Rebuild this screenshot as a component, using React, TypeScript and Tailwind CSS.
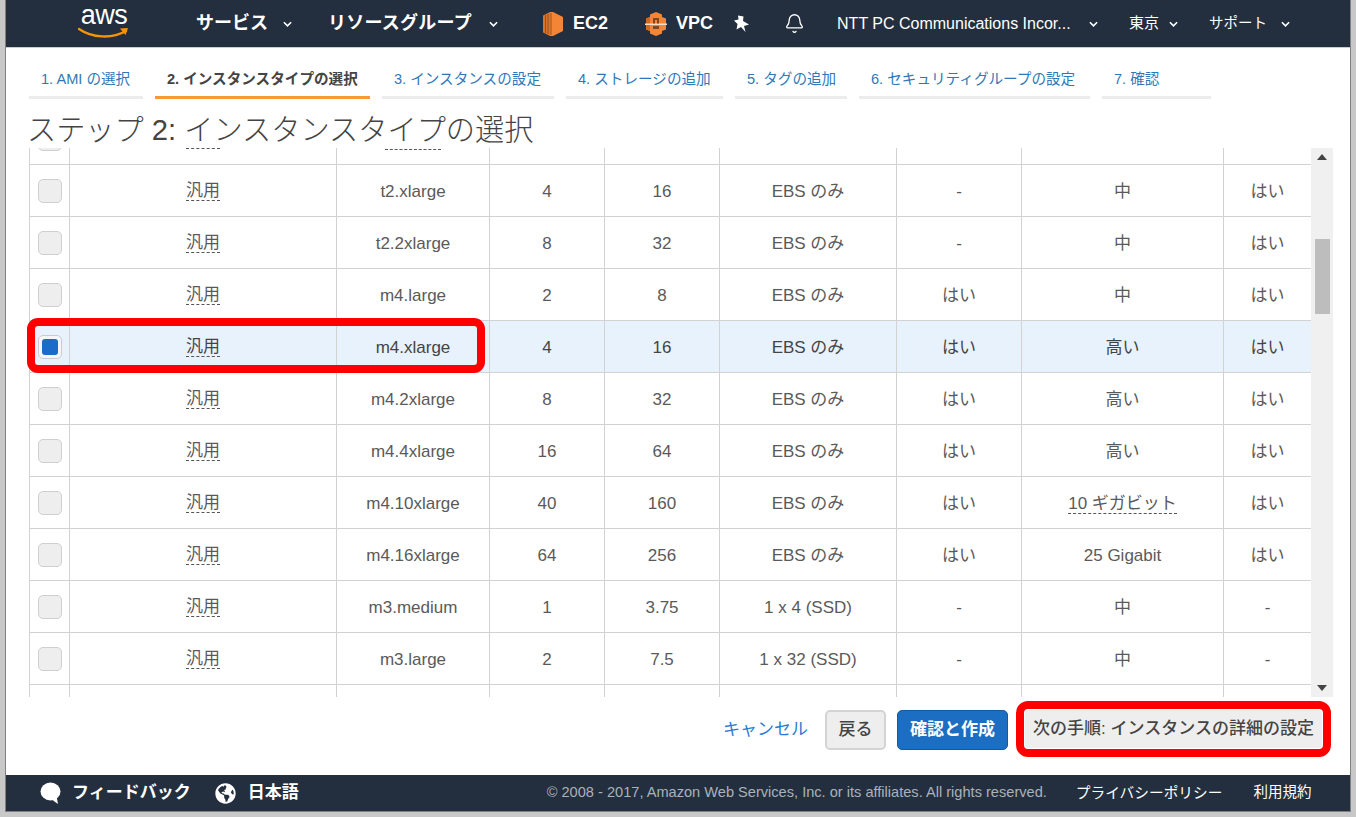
import { Bell } from "lucide-react"
import { FaGlobeAmericas } from "react-icons/fa"

const tabs = [
  { label: "1. AMI の選択", w: "w-[114px]" },
  { label: "2. インスタンスタイプの選択", w: "w-[215px]", active: true },
  { label: "3. インスタンスの設定", w: "w-[172px]" },
  { label: "4. ストレージの追加", w: "w-[157px]" },
  { label: "5. タグの追加", w: "w-[112px]" },
  { label: "6. セキュリティグループの設定", w: "w-[231px]" },
  { label: "7. 確認", w: "w-[109px]" },
]

type Row = { type: string; cpu: string; mem: string; storage: string; ebs: string; net: string; ipv6: string; selected?: boolean; dashedNet?: boolean; dashedType?: boolean }

const rows: Row[] = [
  { type: "t2.large", cpu: "2", mem: "8", storage: "EBS のみ", ebs: "-", net: "低から中", ipv6: "はい", dashedType: true },
  { type: "t2.xlarge", cpu: "4", mem: "16", storage: "EBS のみ", ebs: "-", net: "中", ipv6: "はい" },
  { type: "t2.2xlarge", cpu: "8", mem: "32", storage: "EBS のみ", ebs: "-", net: "中", ipv6: "はい" },
  { type: "m4.large", cpu: "2", mem: "8", storage: "EBS のみ", ebs: "はい", net: "中", ipv6: "はい" },
  { type: "m4.xlarge", cpu: "4", mem: "16", storage: "EBS のみ", ebs: "はい", net: "高い", ipv6: "はい", selected: true },
  { type: "m4.2xlarge", cpu: "8", mem: "32", storage: "EBS のみ", ebs: "はい", net: "高い", ipv6: "はい" },
  { type: "m4.4xlarge", cpu: "16", mem: "64", storage: "EBS のみ", ebs: "はい", net: "高い", ipv6: "はい" },
  { type: "m4.10xlarge", cpu: "40", mem: "160", storage: "EBS のみ", ebs: "はい", net: "10 ギガビット", ipv6: "はい", dashedNet: true },
  { type: "m4.16xlarge", cpu: "64", mem: "256", storage: "EBS のみ", ebs: "はい", net: "25 Gigabit", ipv6: "はい" },
  { type: "m3.medium", cpu: "1", mem: "3.75", storage: "1 x 4 (SSD)", ebs: "-", net: "中", ipv6: "-" },
  { type: "m3.large", cpu: "2", mem: "7.5", storage: "1 x 32 (SSD)", ebs: "-", net: "中", ipv6: "-" },
  { type: "m3.xlarge", cpu: "4", mem: "15", storage: "2 x 40 (SSD)", ebs: "-", net: "高い", ipv6: "-" },
]

function Caret({ className = "" }: { className?: string }) {
  return (
    <svg viewBox="0 0 10 6" className={`w-[9px] h-[6px] ${className}`}>
      <path d="M1 1l4 4 4-4" fill="none" stroke="#fff" strokeWidth="1.8" />
    </svg>
  )
}

function AwsLogo() {
  return (
    <div className="relative w-[52px] h-[40px] mt-[-3px]">
      <span className="block text-center text-[27px] leading-[27px] text-white tracking-[-0.5px]">aws</span>
      <svg viewBox="0 0 52 14" className="absolute left-0 top-[25px] w-[52px] h-[14px]">
        <path d="M1 2c13 9 33 10 47 2" fill="none" stroke="#f79400" strokeWidth="2.4" strokeLinecap="round" />
        <path d="M42 1.500l8-.5-2.500 7z" fill="#f79400" />
      </svg>
    </div>
  )
}

function Ec2Icon() {
  return (
    <svg viewBox="0 0 22 24" className="w-[22px] h-[24px]">
      <path d="M8 0L1 3.500v17L8 24z" fill="#d9742a" />
      <path d="M8 0h3l10 5v14l-10 5H8z" fill="#f58536" />
      <path d="M3.500 3v18M6 2v20M9 1v22" stroke="#8f4d1c" strokeWidth="0.9" />
    </svg>
  )
}

function VpcIcon() {
  return (
    <svg viewBox="0 0 22 24" className="w-[22px] h-[24px]">
      <path d="M11 0l6 2.500V5l4 1.500v11L17 19v2.500L11 24l-6-2.500V19l-4-1.500v-11L5 5V2.500z" fill="#f58536" />
      <path d="M1 6.500L5 5v14l-4-1.500z" fill="#c96a26" />
      <path d="M0 11.500h22V13H0z" fill="#f3dfc9" />
      <path d="M8 6h6v5.500h-2V8h-2v3.500H8zM8 14h6v3H8z" fill="#80481f" />
    </svg>
  )
}

function PinIcon() {
  return (
    <svg viewBox="0 0 17 17" className="w-[17px] h-[17px]">
      <path d="M5 0.500l5.500 1-.5 4.500 6 3.500-5 1.500 1.500 6-4.500-5-4.500 2.500 1-5.500L1 5.500 5.500 4.500z" fill="#fff" />
    </svg>
  )
}

function Bubble() {
  return (
    <svg viewBox="0 0 22 22" className="w-[22px] h-[22px]">
      <ellipse cx="10.500" cy="9.500" rx="10" ry="9" fill="#fff" />
      <path d="M11 17l7 5-1.500-8z" fill="#fff" />
    </svg>
  )
}

function Checkbox({ checked }: { checked?: boolean }) {
  return (
    <div className={`w-[24px] h-[24px] rounded-[5px] border flex items-center justify-center ${checked ? "border-[#c8ccd2] bg-[#f4f6f8]" : "border-[#cfcfcf] bg-[#eeeeee]"}`}>
      {checked && <div className="w-[16px] h-[16px] rounded-[3px] bg-[#1a6cc8]" />}
    </div>
  )
}

function Dashed({ children }: { children: React.ReactNode }) {
  return <span className="border-b border-dashed border-[#555]">{children}</span>
}

export default function App() {
  return (
    <div className="w-[1356px] h-[817px] overflow-hidden relative bg-[#c8c8c8] pl-[6px] pr-[6px] pb-[6px] font-['Liberation_Sans','Noto_Sans_CJK_JP',sans-serif]">
      <div className="h-[811px] flex flex-col bg-white shadow-[0_0_0_1px_#808080]">
        {/* top nav */}
        <div className="h-[48px] shrink-0 bg-[#232f3e] border-b border-[#c9ccd0] flex items-center text-white">
          <div className="ml-[72px]"><AwsLogo /></div>
          <span className="ml-[66px] text-[18px] font-bold">サービス</span>
          <Caret className="ml-[15px]" />
          <span className="ml-[36px] text-[18px] tracking-[0.25px] font-bold">リソースグループ</span>
          <Caret className="ml-[17px]" />
          <div className="ml-[44px]"><Ec2Icon /></div>
          <span className="ml-[9px] text-[18px] font-bold">EC2</span>
          <div className="ml-[37px]"><VpcIcon /></div>
          <span className="ml-[9px] text-[18px] font-bold">VPC</span>
          <div className="ml-[20px]"><PinIcon /></div>
          <Bell size={21} strokeWidth={1.5} className="ml-[34px]" />
          <span className="ml-[32px] text-[16px] w-[234px] whitespace-nowrap">NTT PC Communications Incor...</span>
          <Caret className="ml-[18px]" />
          <span className="ml-[31px] text-[15px]">東京</span>
          <Caret className="ml-[10px]" />
          <span className="ml-[31px] text-[14.500px] whitespace-nowrap">サポート</span>
          <Caret className="ml-[14px]" />
        </div>

        {/* wizard steps */}
        <div className="h-[51px] shrink-0 pl-[23px] flex gap-[12px] items-start">
          {tabs.map((t) => (
            <div key={t.label} className={`${t.w} h-[51px] pl-[12px] pt-[20px] border-b-[3px] text-[14.600px] leading-[22px] whitespace-nowrap ${t.active ? "border-[#f79b2e] text-[#444] font-bold" : "border-[#ececec] text-[#2f78b7]"}`}>
              {t.label}
            </div>
          ))}
        </div>

        <h1 className="h-[49px] shrink-0 pl-[21px] pt-[13px] text-[29.200px] leading-[36px] font-light text-[#444] whitespace-nowrap">
          ステップ 2: インスタンスタイプの選択
        </h1>

        {/* instance table, scrolled */}
        <div className="h-[549px] shrink-0 ml-[23px] w-[1304px] flex bg-white">
          <div className="w-[1282px] overflow-hidden">
            <table className="mt-[-36px] table-fixed border-collapse text-[17px] w-[1282px]">
              <colgroup>
                <col className="w-[40px]" />
                <col className="w-[267px]" />
                <col className="w-[153px]" />
                <col className="w-[115px]" />
                <col className="w-[115px]" />
                <col className="w-[177px]" />
                <col className="w-[125px]" />
                <col className="w-[202px]" />
                <col className="w-[88px]" />
              </colgroup>
              <tbody>
                {rows.map((r) => (
                  <tr key={r.type} className={`h-[52px] text-center ${r.selected ? "bg-[#e8f2fc] text-[#444]" : "text-[#5a5a5a]"}`}>
                    <td className="border border-[#d2d2d2] pl-[8px]"><Checkbox checked={r.selected} /></td>
                    <td className="border border-[#d2d2d2] pt-[1px]"><Dashed>汎用</Dashed></td>
                    <td className="border border-[#d2d2d2] pt-[2px]">{r.dashedType ? <Dashed>{r.type}</Dashed> : r.type}</td>
                    <td className="border border-[#d2d2d2] pt-[2px]">{r.cpu}</td>
                    <td className="border border-[#d2d2d2] pt-[2px]">{r.mem}</td>
                    <td className="border border-[#d2d2d2] pt-[2px]">{r.storage}</td>
                    <td className="border border-[#d2d2d2] pt-[2px]">{r.ebs}</td>
                    <td className="border border-[#d2d2d2] pt-[2px]">{r.dashedNet ? <Dashed>{r.net}</Dashed> : r.net}</td>
                    <td className="border border-[#d2d2d2] pt-[2px]">{r.ipv6}</td>
                  </tr>
                ))}
              </tbody>
            </table>
          </div>
          <div className="w-[22px] bg-[#f0f0f0] flex flex-col items-center pt-[6px] pb-[6px]">
            <svg viewBox="0 0 10 6" className="w-[10px] h-[6px]"><path d="M5 0l5 6H0z" fill="#444" /></svg>
            <div className="w-[15px] h-[75px] bg-[#bdbdbd] mt-[79px]" />
            <svg viewBox="0 0 10 6" className="w-[10px] h-[6px] mt-auto"><path d="M5 6l5-6H0z" fill="#444" /></svg>
          </div>
        </div>

        {/* actions */}
        <div className="h-[78px] shrink-0 flex items-start justify-end pr-[28px] pt-[13px]">
          <span className="text-[17px] leading-[40px] text-[#2a7ad2] mr-[17px]">キャンセル</span>
          <button className="w-[61px] h-[40px] rounded-[5px] border-2 border-[#d4d4d4] bg-[#eeeeee] text-[#444] text-[17px] font-medium">戻る</button>
          <button className="ml-[11px] w-[111px] h-[40px] rounded-[5px] border border-[#15599e] bg-[#1b6ec2] text-white text-[17px] font-bold">確認と作成</button>
          <button className="ml-[17px] w-[297px] h-[38px] rounded-[4px] bg-[#eeeeee] text-[#444] text-[17px] font-medium whitespace-nowrap">次の手順: インスタンスの詳細の設定</button>
        </div>

        {/* footer */}
        <div className="h-[36px] shrink-0 bg-[#232f3e] flex items-center text-white">
          <div className="ml-[34px]"><Bubble /></div>
          <span className="ml-[10px] text-[17px] font-bold whitespace-nowrap">フィードバック</span>
          <FaGlobeAmericas size={21} className="ml-[24px]" />
          <span className="ml-[12px] text-[17px] font-bold">日本語</span>
          <span className="ml-[248px] text-[14.600px] text-[#aab2bb] whitespace-nowrap">© 2008 - 2017, Amazon Web Services, Inc. or its affiliates. All rights reserved.</span>
          <span className="ml-[29px] text-[14.700px] whitespace-nowrap">プライバシーポリシー</span>
          <span className="ml-[31px] text-[14.500px] whitespace-nowrap">利用規約</span>
        </div>
      </div>

      {/* red callouts */}
      <div className="absolute left-[27px] top-[318px] w-[458px] h-[55px] rounded-[11px] border-[8px] border-[#fe0000]" />
      <div className="absolute left-[1016px] top-[701px] w-[315px] h-[56px] rounded-[12px] border-[8px] border-[#fe0000]" />
    </div>
  )
}
